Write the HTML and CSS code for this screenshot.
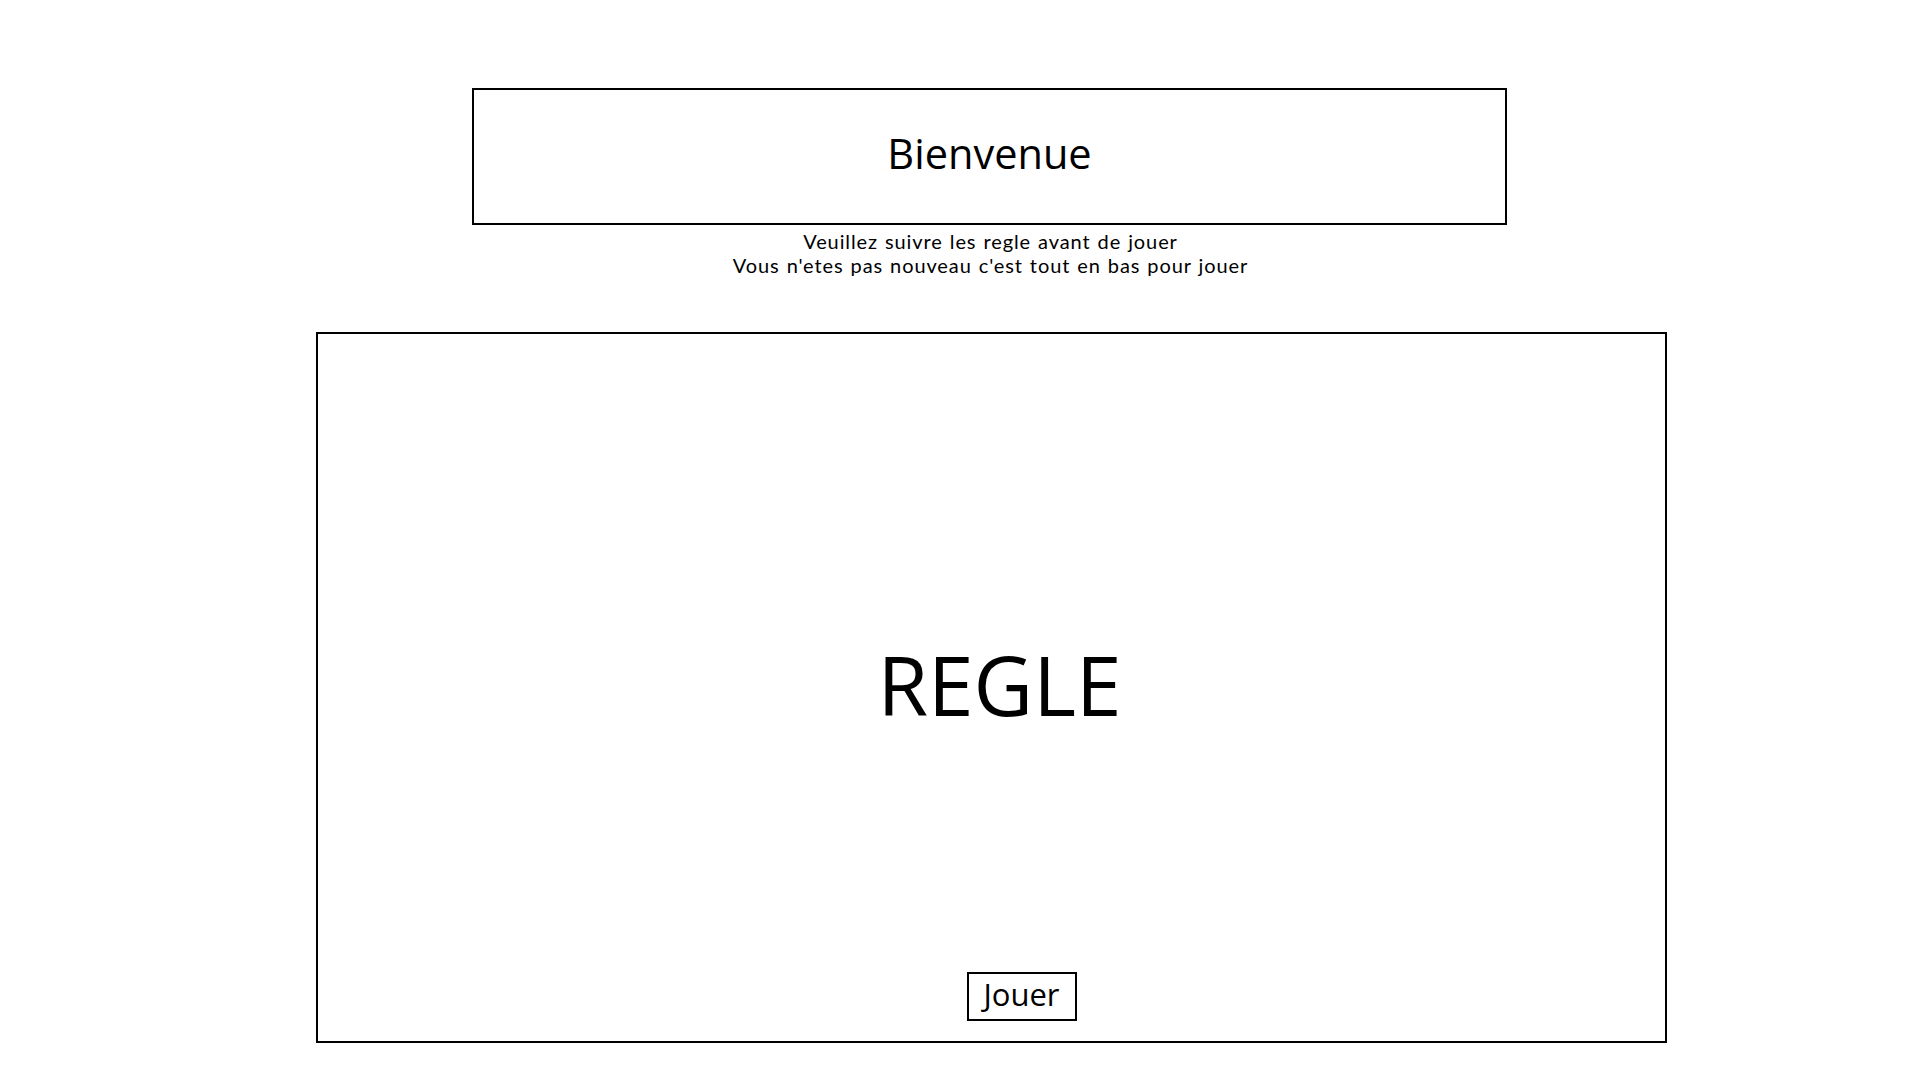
FILE: index.html
```html
<!DOCTYPE html>
<html lang="fr">
<head>
<meta charset="utf-8">
<title>Bienvenue</title>
<link rel="stylesheet" href="styles.css">
</head>
<body>
<div class="page">
  <header class="welcome">
    <h1 class="welcome-title">Bienvenue</h1>
  </header>
  <div class="intro">
    <p class="intro-line">Veuillez suivre les regle avant de jouer</p>
    <p class="intro-line">Vous n'etes pas nouveau c'est tout en bas pour jouer</p>
  </div>
  <section class="rules">
    <h2 class="rules-title">REGLE</h2>
    <button class="play">Jouer</button>
  </section>
</div>
</body>
</html>
```
FILE: styles.css
```css
html, body {
  margin: 0;
  padding: 0;
  background: #fff;
}
body {
  font-family: "Open Sans", "Noto Sans", sans-serif;
  color: #000;
}
.page {
  width: 1351px;
  margin-left: 316px;
  padding-top: 88px;
  display: flex;
  flex-direction: column;
}
.welcome {
  width: 1035px;
  height: 137px;
  box-sizing: border-box;
  margin-left: 156px;
  border: 2px solid #000;
  display: flex;
  align-items: center;
  justify-content: center;
}
.welcome-title {
  margin: 0;
  font-size: 41.5px;
  font-weight: 400;
  line-height: 1;
  padding-bottom: 6px;
}
.intro {
  margin: 4px 0 0 0;
  padding-right: 2px;
  height: 48px;
  display: flex;
  flex-direction: column;
  align-items: center;
  font-family: "Lato", "Open Sans", sans-serif;
  font-size: 20px;
  line-height: 24px;
  letter-spacing: 0.9px;
  word-spacing: 1px;
}
.intro-line {
  margin: 0;
}
.rules {
  margin-top: 55px;
  height: 711px;
  box-sizing: border-box;
  border: 2px solid #000;
  display: flex;
  flex-direction: column;
  align-items: center;
  padding-top: 70px;
}
.rules-title {
  flex: 1;
  margin: 0;
  display: flex;
  align-items: center;
  justify-content: center;
  font-size: 82px;
  font-weight: 400;
  line-height: 1;
  padding-left: 16px;
  padding-bottom: 8px;
}
.play {
  margin: 0 0 20px 60px;
  width: 110px;
  height: 49px;
  box-sizing: border-box;
  border: 2px solid #000;
  background: #fff;
  font-family: "Open Sans", "Noto Sans", sans-serif;
  font-size: 31px;
  line-height: 1;
  color: #000;
  padding: 0 0 4px 0;
  border-radius: 0;
}
```
